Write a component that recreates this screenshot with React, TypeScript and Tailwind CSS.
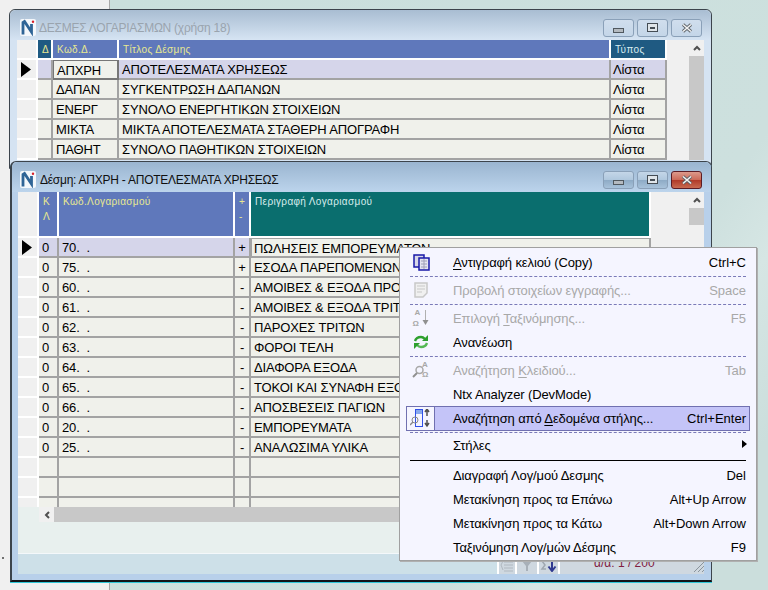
import React from 'react';

const rows1 = [
  ['ΑΠΧΡΗ', 'ΑΠΟΤΕΛΕΣΜΑΤΑ ΧΡΗΣΕΩΣ'],
  ['ΔΑΠΑΝ', 'ΣΥΓΚΕΝΤΡΩΣΗ ΔΑΠΑΝΩΝ'],
  ['ΕΝΕΡΓ', 'ΣΥΝΟΛΟ ΕΝΕΡΓΗΤΙΚΩΝ ΣΤΟΙΧΕΙΩΝ'],
  ['ΜΙΚΤΑ', 'ΜΙΚΤΑ ΑΠΟΤΕΛΕΣΜΑΤΑ ΣΤΑΘΕΡΗ ΑΠΟΓΡΑΦΗ'],
  ['ΠΑΘΗΤ', 'ΣΥΝΟΛΟ ΠΑΘΗΤΙΚΩΝ ΣΤΟΙΧΕΙΩΝ'],
];

const rows2 = [
  ['0', '70.  .', '+', 'ΠΩΛΗΣΕΙΣ ΕΜΠΟΡΕΥΜΑΤΩΝ'],
  ['0', '75.  .', '+', 'ΕΣΟΔΑ ΠΑΡΕΠΟΜΕΝΩΝ ΑΣΧΟΛΙΩΝ'],
  ['0', '60.  .', '-', 'ΑΜΟΙΒΕΣ & ΕΞΟΔΑ ΠΡΟΣΩΠΙΚΟΥ'],
  ['0', '61.  .', '-', 'ΑΜΟΙΒΕΣ & ΕΞΟΔΑ ΤΡΙΤΩΝ'],
  ['0', '62.  .', '-', 'ΠΑΡΟΧΕΣ ΤΡΙΤΩΝ'],
  ['0', '63.  .', '-', 'ΦΟΡΟΙ ΤΕΛΗ'],
  ['0', '64.  .', '-', 'ΔΙΑΦΟΡΑ ΕΞΟΔΑ'],
  ['0', '65.  .', '-', 'ΤΟΚΟΙ ΚΑΙ ΣΥΝΑΦΗ ΕΞΟΔΑ'],
  ['0', '66.  .', '-', 'ΑΠΟΣΒΕΣΕΙΣ ΠΑΓΙΩΝ'],
  ['0', '20.  .', '-', 'ΕΜΠΟΡΕΥΜΑΤΑ'],
  ['0', '25.  .', '-', 'ΑΝΑΛΩΣΙΜΑ ΥΛΙΚΑ'],
  ['', '', '', ''],
  ['', '', '', ''],
  ['', '', '', ''],
];

const Logo = () => (
  <svg width="16" height="17" viewBox="0 0 16 17" className="shrink-0">
    <rect x="0" y="0" width="16" height="17" rx="2" fill="#f4f7fb" />
    <path d="M3 15.500V3.500L4.500 2.500l7 10.500v-8" fill="none" stroke="#2f6496" strokeWidth="2.800" />
    <circle cx="13" cy="2.800" r="1.200" fill="#d8202a" />
  </svg>
);

const WinButtons = ({ active }: { active?: boolean }) => {
  const base = active
    ? 'bg-[linear-gradient(#c4d6e8_0%,#b0c8de_48%,#8eabc6_52%,#a8c2da_100%)]'
    : 'bg-[linear-gradient(#d0deed,#c4d6e8)]';
  return (
    <div className="flex gap-[3px]">
      <div className={`w-[31px] h-[18px] rounded-[3px] border border-[#8aa0b8] flex items-end justify-center pb-[3px] ${base}`}>
        <div className="w-[11px] h-[5px] bg-[#b4bac0] border border-[#50585f]" />
      </div>
      <div className={`w-[31px] h-[18px] rounded-[3px] border border-[#8aa0b8] flex items-center justify-center ${base}`}>
        <div className="w-[11px] h-[9px] border border-[#454d55] bg-[#dfe5ea] flex items-center justify-center">
          <div className="w-[5px] h-[2px] bg-[#454d55]" />
        </div>
      </div>
      <div
        className={`w-[31px] h-[18px] rounded-[3px] border flex items-center justify-center ${
          active
            ? 'border-[#5c1c24] bg-[linear-gradient(#dc9a8c_0%,#cc6a58_48%,#b03a28_52%,#c86a50_100%)]'
            : 'border-[#8aa0b8] bg-[linear-gradient(#d0deed,#c4d6e8)]'
        }`}
      >
        <svg width="12" height="10" viewBox="0 0 12 10">
          <path d="M2 1.500l8 7M10 1.500l-8 7" stroke="#5a6066" strokeWidth="3.200" />
          <path d="M2 1.500l8 7M10 1.500l-8 7" stroke="#f2f2f2" strokeWidth="1.600" />
        </svg>
      </div>
    </div>
  );
};

const Pointer = () => (
  <svg width="11" height="15" viewBox="0 0 11 15">
    <path d="M0 0l10 7.500L0 15z" fill="#000" />
  </svg>
);

const Chevron = ({ left }: { left?: boolean }) => (
  <svg width="8" height="6" viewBox="0 0 8 6" className={left ? '-rotate-90' : ''}>
    <path d="M1 5l3-3 3 3" fill="none" stroke="#505050" strokeWidth="2" />
  </svg>
);

const Cell = ({ w, bg, children, className = '' }: { w: string; bg?: string; children?: React.ReactNode; className?: string }) => (
  <div className={`${w} ${bg ?? ''} shrink-0 h-full border-r-2 border-b-2 border-[#a3a3a3] overflow-hidden whitespace-pre flex items-center pt-[2px] tracking-[-0.15px] ${className}`}>
    {children}
  </div>
);

const Hd = ({ w, bg, children, top }: { w: string; bg: string; children?: React.ReactNode; top?: boolean }) => (
  <div
    className={`${w} ${bg} shrink-0 h-full border-r-2 border-b-2 border-white text-[10px] tracking-[0.35px] text-[#e8e890] whitespace-pre-line overflow-hidden pl-[4px] ${
      top ? 'pt-[2px] leading-[15px]' : 'flex items-center pt-[1px]'
    }`}
  >
    {children}
  </div>
);

const ListWindow = () => (
  <div className="absolute left-[9px] top-[9px] w-[703px] h-[160px] rounded-t-[6px] border border-[#3c444c] bg-[#d5e3f2] px-[7px]">
    <div className="h-[30px] -mx-[7px] pt-[5px] rounded-t-[6px] bg-[linear-gradient(#a9bdd2,#d6e4f3)] flex items-center justify-between pl-[10px] pr-[9px]">
      <div className="flex items-center gap-[3px] text-[12px] tracking-[-0.25px] text-[#9aa4ae]">
        <Logo />
        <span>ΔΕΣΜΕΣ ΛΟΓΑΡΙΑΣΜΩΝ (χρήση 18)</span>
      </div>
      <WinButtons />
    </div>
    <div className="w-[687px] h-[120px] bg-white overflow-hidden flex text-[13px] text-black">
      <div className="w-[672px] shrink-0">
        <div className="h-[20px] flex">
          <div className="w-[21px] h-full bg-[#f0f0f0] border-r-2 border-b-2 border-white" />
          <Hd w="w-[15px]" bg="bg-[#1f5a82]">Δ</Hd>
          <Hd w="w-[66px]" bg="bg-[#5f78bb]">Κωδ.Δ.</Hd>
          <Hd w="w-[492px]" bg="bg-[#5f78bb]">Τίτλος Δέσμης</Hd>
          <Hd w="w-[56px]" bg="bg-[#1f5a82]"><span className="text-[#d8ecf0]">Τύπος</span></Hd>
          <div className="w-[22px] h-full bg-[#f0f0f0]" />
        </div>
        {rows1.map((r, i) => {
          const bg = i === 0 ? 'bg-[#d5d5ea]' : 'bg-[#f0f1eb]';
          return (
            <div key={r[0]} className="h-[20px] flex">
              <div className="w-[21px] h-full bg-[#f0f0f0] border-r-2 border-b-2 border-white flex items-center pl-[4px]">
                {i === 0 && <Pointer />}
              </div>
              <Cell w="w-[15px]" bg={bg} />
              <Cell
                w="w-[66px]"
                bg="bg-[#f0f1eb]"
                className={i === 0 ? 'pl-[3px] !border-[#777777] border-l-[1px] border-t-[1px]' : 'pl-[3px]'}
              >
                {r[0]}
              </Cell>
              <Cell w="w-[492px]" bg={bg} className="pl-[3px]">{r[1]}</Cell>
              <Cell w="w-[56px]" bg={bg} className="pl-[2px]">Λίστα</Cell>
              <div className="w-[22px] h-full bg-[#f0f0f0]" />
            </div>
          );
        })}
      </div>
      <div className="w-[15px] shrink-0 flex flex-col bg-[#f0f0f0]">
        <div className="h-[16px] flex items-center justify-center"><Chevron /></div>
        <div className="flex-1 bg-[#c8c8c8]" />
      </div>
    </div>
  </div>
);

const AccountsWindow = () => (
  <div className="absolute left-[10px] top-[161px] w-[702px] h-[421px] rounded-t-[6px] border-t border-r border-[#3c444c] border-l-2 border-b-2 border-b-[#101418] bg-[#b8d0ea] flex flex-col shadow-[0_1px_0_#30c8d8]">
    <div className="h-[30px] shrink-0 pt-[5px] rounded-t-[6px] bg-[linear-gradient(#9ab5d0,#bcd4ec)] flex items-center justify-between pl-[8px] pr-[9px]">
      <div className="flex items-center gap-[4px] text-[12px] tracking-[-0.25px] text-[#101010]">
        <Logo />
        <span>Δέσμη: ΑΠΧΡΗ - ΑΠΟΤΕΛΕΣΜΑΤΑ ΧΡΗΣΕΩΣ</span>
      </div>
      <WinButtons active />
    </div>
    <div className="mx-[6px] w-[686px] flex flex-col flex-1 min-h-0">
      <div className="h-[315px] shrink-0 flex bg-white text-[13px] text-black overflow-hidden">
        <div className="w-[671px] shrink-0">
          <div className="h-[46px] flex">
            <div className="w-[21px] h-full bg-[#f0f0f0] border-r-2 border-b-2 border-white" />
            <Hd w="w-[20px]" bg="bg-[#5f78bb]" top>{'Κ\nΛ'}</Hd>
            <Hd w="w-[176px]" bg="bg-[#5f78bb]" top>Κωδ.Λογαριασμού</Hd>
            <Hd w="w-[16px]" bg="bg-[#5f78bb]" top>{'+\n-'}</Hd>
            <Hd w="w-[400px]" bg="bg-[#0a6e6e]" top><span className="text-[#d8ecec]">Περιγραφή Λογαριασμού</span></Hd>
            <div className="w-[38px] h-full bg-[#f0f0f0]" />
          </div>
          {rows2.map((r, i) => {
            const bg = i === 0 ? 'bg-[#d5d5ea]' : 'bg-[#f0f1eb]';
            return (
              <div key={i} className="h-[20px] flex">
                <div className="w-[21px] h-full bg-[#f0f0f0] border-r-2 border-b-2 border-white flex items-center pl-[4px]">
                  {i === 0 && <Pointer />}
                </div>
                <Cell w="w-[20px]" bg={bg} className="pl-[3px]">{r[0]}</Cell>
                <Cell w="w-[176px]" bg={bg} className="pl-[3px]">{r[1]}</Cell>
                <Cell w="w-[16px]" bg={bg} className="justify-center">{r[2]}</Cell>
                <Cell
                  w="w-[400px]"
                  bg="bg-[#f0f1eb]"
                  className={i === 0 ? 'pl-[2px] border-l-[1px] border-t-[1px] border-[#777777]' : 'pl-[3px]'}
                >
                  {r[3]}
                </Cell>
                <div className="w-[38px] h-full bg-[#f0f0f0]" />
              </div>
            );
          })}
        </div>
        <div className="w-[15px] shrink-0 flex flex-col bg-[#f0f0f0]">
          <div className="h-[16px] flex items-center justify-center"><Chevron /></div>
          <div className="h-[17px] bg-[#c8c8c8]" />
        </div>
      </div>
      <div className="h-[46px] shrink-0 bg-[#e8f0ee] flex flex-col">
        <div className="h-[15px] flex">
          <div className="w-[21px]" />
          <div className="w-[15px] flex items-center justify-center bg-[#f0f0f0]"><Chevron left /></div>
          <div className="flex-1 bg-[#c8c8c8]" />
        </div>
      </div>
      <div className="h-[21px] shrink-0 border-t border-[#f4f8fa] bg-[#cde0e8] flex">
        <div className="w-[479px]" />
        <div className="flex-1 bg-[#cfd8e0] flex items-stretch relative">
          <div className="w-[20px] border-x-2 border-white flex items-center justify-center pt-[4px]">
            <svg width="14" height="12" viewBox="0 0 14 12"><path d="M4 2h9M4 5h9M4 8h9M4 11h9M3 1L1 5l2 5" fill="none" stroke="#b0b8c0" /></svg>
          </div>
          <div className="w-[22px] border-r-2 border-white flex items-center justify-center pt-[4px]">
            <svg width="12" height="12" viewBox="0 0 12 12"><path d="M1 1h10L7 6v5H5V6z" fill="#a8b0b8" /></svg>
          </div>
          <div className="w-[21px] border-r-2 border-white flex items-center justify-center pt-[4px]">
            <svg width="17" height="12" viewBox="0 0 17 12"><path d="M6 1H2l3 4-3 4h4" fill="none" stroke="#a0a8b0" strokeWidth="1.500" /><path d="M12 1v9M8.500 6.500L12 11l3.500-4.500" fill="none" stroke="#303a90" strokeWidth="2" /></svg>
          </div>
          <span className="ml-[34px] text-[12px] leading-[15px] mt-[2px] text-[#802040]">α/α: 1 / 200</span>
          <svg width="12" height="12" viewBox="0 0 12 12" className="absolute right-[-1px] bottom-[1px]">
            <path d="M1 11L11 1M5 11l6-6M9 11l2-2" stroke="#8a949c" strokeWidth="1" />
          </svg>
        </div>
      </div>
    </div>
  </div>
);

const CopyIcon = () => (
  <svg width="17" height="17" viewBox="0 0 17 17">
    <rect x="1" y="1" width="10" height="12" fill="#d8d8e8" stroke="#1818a8" strokeWidth="1.500" />
    <rect x="6" y="4" width="10" height="12" fill="#e4e4f0" stroke="#1818a8" strokeWidth="1.500" />
    <path d="M8 7h6M8 10h6M8 13h6M11 5v10" stroke="#a0a0b8" />
  </svg>
);
const DocIcon = () => (
  <svg width="14" height="16" viewBox="0 0 14 16">
    <path d="M1 1h12v10l-4 4H1z" fill="#f0f0f0" stroke="#c8c8c8" strokeWidth="1.500" />
    <path d="M3 4h8M3 7h8M3 10h5" stroke="#c8c8c8" />
  </svg>
);
const SortIcon = () => (
  <div className="relative w-[17px] h-[22px] text-[8px] leading-[11px] font-bold text-[#a8a8a8]">
    <div className="pl-[2px]">A</div>
    <div>Ω</div>
    <svg width="7" height="16" viewBox="0 0 7 16" className="absolute right-[1px] top-[3px]">
      <path d="M3.500 0v11" stroke="#b0b0b0" /><path d="M0.500 10h6L3.500 15z" fill="#909090" />
    </svg>
  </div>
);
const RefreshIcon = () => (
  <svg width="16" height="14" viewBox="0 0 16 14">
    <path d="M2 6c1-3 3-4 6-4 2 0 3 1 4 2" fill="none" stroke="#2ea02e" strokeWidth="2.400" />
    <path d="M15 0v6H9z" fill="#2ea02e" />
    <path d="M14 8c-1 3-3 4-6 4-2 0-3-1-4-2" fill="none" stroke="#55b855" strokeWidth="2.400" />
    <path d="M1 14V8h6z" fill="#2ea02e" />
  </svg>
);
const KeySearchIcon = () => (
  <div className="relative w-[18px] h-[20px]">
    <svg width="12" height="14" viewBox="0 0 12 14" className="absolute left-0 top-[5px]">
      <circle cx="7.500" cy="5" r="3.500" fill="none" stroke="#a8a8a8" strokeWidth="1.500" />
      <path d="M5 8l-4 4" stroke="#909090" strokeWidth="2" />
    </svg>
    <div className="absolute left-[10px] top-0 text-[8px] leading-[10px] font-bold text-[#a8a8a8]">A<br />Ω</div>
  </div>
);
const ColumnSearchIcon = () => (
  <svg width="22" height="19" viewBox="0 0 22 19">
    <rect x="5.500" y="0.500" width="7" height="17" fill="#f4f4ff" stroke="#3050e8" />
    <rect x="6" y="1" width="6" height="4" fill="#88a8ec" />
    <circle cx="5" cy="11" r="3" fill="none" stroke="#888" />
    <path d="M3 13l-3 3" stroke="#888" strokeWidth="1.500" />
    <path d="M17 1v6M15 3l2-3 2 3M17 11v6M15 14l2 3 2-3" fill="none" stroke="#505050" strokeWidth="1.500" />
  </svg>
);

type ItemProps = {
  label: React.ReactNode;
  keys?: string;
  icon?: React.ReactNode;
  disabled?: boolean;
  active?: boolean;
  arrow?: boolean;
};

const U = ({ children }: { children: React.ReactNode }) => <span className="underline underline-offset-2">{children}</span>;

const Item = ({ label, keys, icon, disabled, active, arrow }: ItemProps) => (
  <div
    className={`flex items-center whitespace-pre ${disabled ? 'text-[#a8a8a8]' : 'text-black'} ${
      active ? 'h-[25px] mx-[6px] border border-[#7070b0] bg-[#c4c4f8]' : 'h-[24px] mx-[6px] border border-transparent'
    }`}
  >
    <div className={`w-[28px] h-full shrink-0 flex items-center justify-center ${active ? 'bg-[#f5f5ff] border-r border-[#7070b0]' : ''}`}>{icon}</div>
    <div className="pl-[18px] pt-[1px] flex-1 tracking-[-0.12px]">{label}</div>
    {keys && <div className="pr-[3px] pt-[1px]">{keys}</div>}
    {arrow && (
      <svg width="5" height="8" viewBox="0 0 5 8" className="mr-[2px] -mt-[3px]"><path d="M0 0l5 4-5 4z" fill="#000" /></svg>
    )}
  </div>
);

const Dash = () => <div className="h-[4px] mx-[10px] flex items-center"><div className="w-full border-t border-dashed border-[#7a7ab8]" /></div>;

const ContextMenu = () => (
  <div className="absolute left-[399px] top-[247px] w-[358px] h-[314px] border border-[#a0a0a0] bg-[#f5f5ff] pt-[2px] text-[13px] shadow-[1px_1px_0_#b0b0b0]">
    <Item label={<><U>Α</U>ντιγραφή κελιού (Copy)</>} keys="Ctrl+C" icon={<CopyIcon />} />
    <Dash />
    <Item disabled label="Προβολή στοιχείων εγγραφής..." keys="Space" icon={<DocIcon />} />
    <Dash />
    <Item disabled label={<>Επιλογή <U>Τ</U>αξινόμησης...</>} keys="F5" icon={<SortIcon />} />
    <Item label="Ανανέωση" icon={<RefreshIcon />} />
    <Dash />
    <Item disabled label={<>Αναζήτηση <U>Κ</U>λειδιού...</>} keys="Tab" icon={<KeySearchIcon />} />
    <Item label="Ntx Analyzer (DevMode)" />
    <Item active label={<>Αναζήτηση από <U>Δ</U>εδομένα στήλης...</>} keys="Ctrl+Enter" icon={<ColumnSearchIcon />} />
    <div className="h-[2px] mx-[10px] flex items-center"><div className="w-full border-t border-dashed border-[#7a7ab8]" /></div>
    <Item label="Στήλες" arrow />
    <div className="h-[6px] mx-[10px] flex items-center"><div className="w-full border-t border-black" /></div>
    <Item label="Διαγραφή Λογ/μού Δεσμης" keys="Del" />
    <Item label="Μετακίνηση προς τα Επάνω" keys="Alt+Up Arrow" />
    <Item label="Μετακίνηση προς τα Κάτω" keys="Alt+Down Arrow" />
    <Item label="Ταξινόμηση Λογ/μών Δέσμης" keys="F9" />
  </div>
);

export default function App() {
  return (
    <div className="relative w-[768px] h-[590px] overflow-hidden flex font-['Liberation_Sans',sans-serif]">
      <div className="w-[110px] h-full bg-[#f0f0f0] border-r border-[#a8a8a8] relative">
        <div className="absolute left-[2px] top-[557px] w-[2px] h-[2px] bg-[#707070]" />
      </div>
      <div className="flex-1 h-full bg-[linear-gradient(125deg,#c9dfdc_0%,#cde0de_70%,#d6e6e4_78%,#cbdedc_90%)]" />
      <ListWindow />
      <AccountsWindow />
      <ContextMenu />
    </div>
  );
}
